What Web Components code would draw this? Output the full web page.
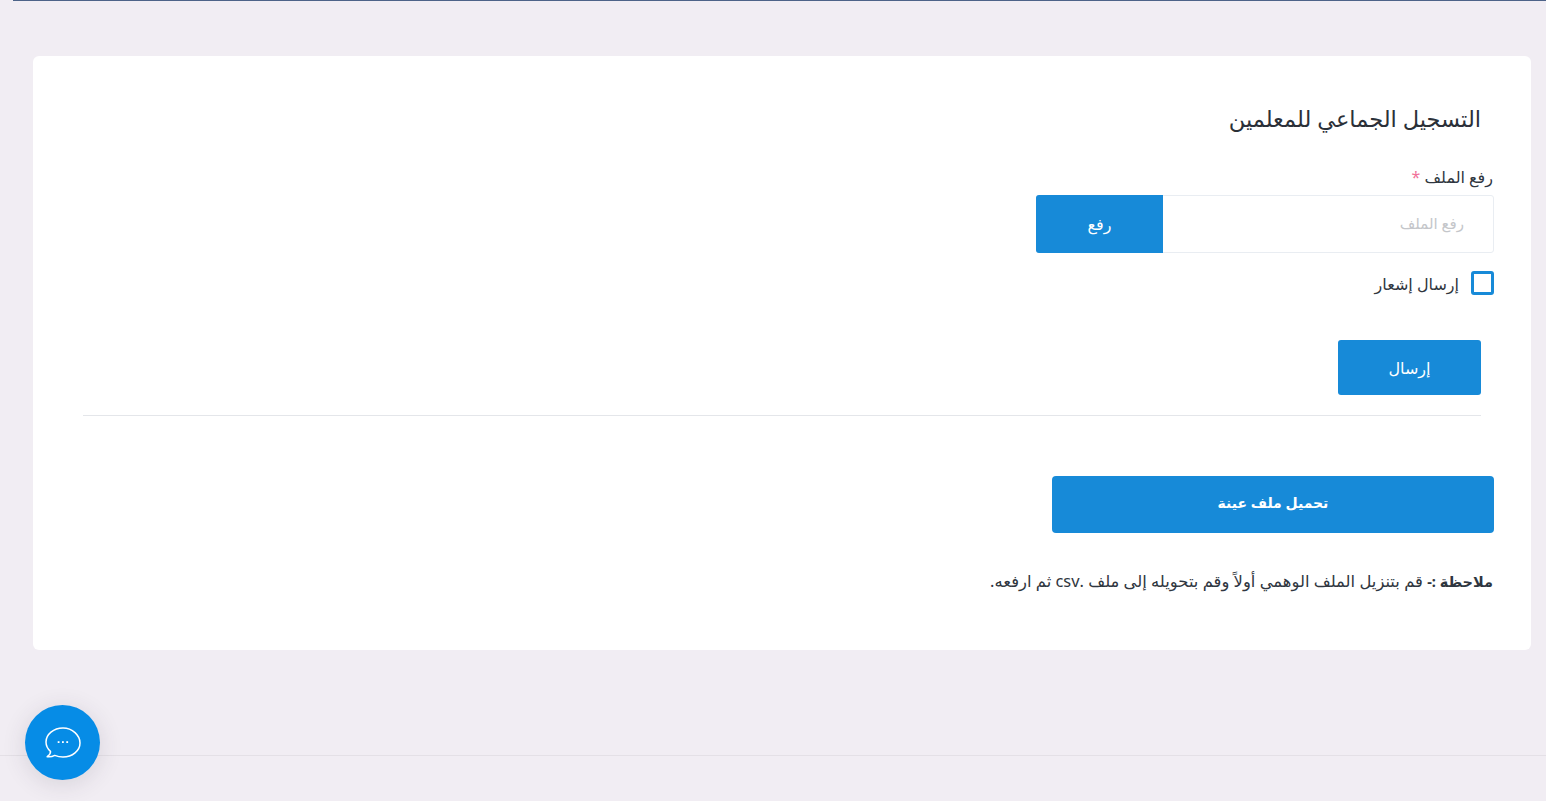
<!DOCTYPE html>
<html lang="ar" dir="rtl">
<head>
<meta charset="utf-8">
<title>التسجيل الجماعي للمعلمين</title>
<style>
    html, body {
        margin: 0;
        height: 100%;
        background: #f1edf3;
        font-family: "Noto Sans", "DejaVu Sans", sans-serif;
        color: #2f3640;
    }
</style>
</head>
<body>
<app-page>
    <form-card heading="التسجيل الجماعي للمعلمين">
        <file-upload label="رفع الملف" placeholder="رفع الملف" action="رفع"></file-upload>
        <check-field label="إرسال إشعار"></check-field>
        <send-row label="إرسال"></send-row>
        <download-row label="تحميل ملف عينة"></download-row>
        <note-line title-text="ملاحظة :-">قم بتنزيل الملف الوهمي أولاً وقم بتحويله إلى ملف .csv ثم ارفعه.</note-line>
    </form-card>
</app-page>
<chat-fab></chat-fab>
<script>
class AppPage extends HTMLElement {
    constructor() {
        super();
        this.attachShadow({ mode: "open" });
    }
    connectedCallback() {
        this.shadowRoot.innerHTML = `
        <style>
            :host {
                display: flex;
                flex-direction: column;
                height: 801px;
                overflow: hidden;
            }
            .topline {
                height: 1px;
                margin-left: 13px;
                background: #4d6388;
                flex: none;
            }
            main {
                padding: 55px 15px 0 33px;
                height: 754px;
                box-sizing: border-box;
                flex: none;
            }
            footer {
                flex: 1;
                border-top: 1px solid #e4e0e6;
            }
        </style>
        <div class="topline"></div>
        <main><slot></slot></main>
        <footer></footer>
        `;
    }
}

class FormCard extends HTMLElement {
    constructor() {
        super();
        this.attachShadow({ mode: "open" });
    }
    connectedCallback() {
        this.shadowRoot.innerHTML = `
        <style>
            :host {
                display: block;
                height: 594px;
                box-sizing: border-box;
                background: #fff;
                border-radius: 6px;
                padding: 47px 37px 0 50px;
            }
            h2 {
                margin: 0 13px 30px 0;
                font-size: 22.5px;
                line-height: 32px;
                font-weight: 400;
                color: #2b3038;
            }
        </style>
        <h2>${this.getAttribute("heading")}</h2>
        <slot></slot>
        `;
    }
}

class FileUpload extends HTMLElement {
    constructor() {
        super();
        this.attachShadow({ mode: "open" });
    }
    connectedCallback() {
        this.shadowRoot.innerHTML = `
        <style>
            :host {
                display: block;
                width: 458px;
            }
            label {
                display: block;
                font-size: 16px;
                line-height: 24px;
                margin: 0 1px 6px 0;
                color: #2f3640;
            }
            label span { color: #f1729a; }
            .box {
                display: flex;
                height: 58px;
                box-sizing: border-box;
                border: 1px solid #e9edf2;
                border-radius: 3px;
                background: #fff;
            }
            .hint {
                flex: 1;
                padding-right: 29px;
                line-height: 54px;
                font-size: 15px;
                color: #c4c6ca;
            }
            .btn {
                width: 127px;
                margin: -1px 0 -1px -1px;
                background: #178ad8;
                color: #fff;
                font-size: 16px;
                line-height: 58px;
                text-align: center;
                border-radius: 3px 0 0 3px;
            }
        </style>
        <label>${this.getAttribute("label")} <span>*</span></label>
        <div class="box">
            <div class="hint">${this.getAttribute("placeholder")}</div>
            <div class="btn">${this.getAttribute("action")}</div>
        </div>
        `;
    }
}

class CheckField extends HTMLElement {
    constructor() {
        super();
        this.attachShadow({ mode: "open" });
    }
    connectedCallback() {
        this.shadowRoot.innerHTML = `
        <style>
            :host {
                display: flex;
                align-items: center;
                gap: 12px;
                margin-top: 18px;
                height: 24px;
            }
            i {
                width: 23px;
                height: 24px;
                box-sizing: border-box;
                border: 3px solid #178ad8;
                border-radius: 3px;
                background: #fff;
            }
            span {
                font-size: 16px;
                line-height: 26px;
                padding-top: 2px;
                color: #2f3640;
            }
        </style>
        <i></i>
        <span>${this.getAttribute("label")}</span>
        `;
    }
}

class SendRow extends HTMLElement {
    constructor() {
        super();
        this.attachShadow({ mode: "open" });
    }
    connectedCallback() {
        this.shadowRoot.innerHTML = `
        <style>
            :host {
                display: block;
                margin: 45px 0 0 0;
                padding: 0 13px 20px 0;
            }
            .btn {
                width: 143px;
                height: 55px;
                line-height: 57px;
                text-align: center;
                background: #178ad8;
                color: #fff;
                font-size: 16px;
                border-radius: 3px;
            }
            hr {
                margin: 20px 0 0 0;
                border: 0;
                border-top: 1px solid #e4e6ea;
            }
        </style>
        <div class="btn">${this.getAttribute("label")}</div>
        <hr>
        `;
    }
}

class DownloadRow extends HTMLElement {
    constructor() {
        super();
        this.attachShadow({ mode: "open" });
    }
    connectedCallback() {
        this.shadowRoot.innerHTML = `
        <style>
            :host {
                display: block;
                width: 442px;
                margin-top: 40px;
            }
            .btn {
                height: 57px;
                line-height: 53px;
                text-align: center;
                background: #178ad8;
                color: #fff;
                font-size: 14px;
                font-weight: 700;
                border-radius: 4px;
            }
        </style>
        <div class="btn">${this.getAttribute("label")}</div>
        `;
    }
}

class NoteLine extends HTMLElement {
    constructor() {
        super();
        this.attachShadow({ mode: "open" });
    }
    connectedCallback() {
        this.shadowRoot.innerHTML = `
        <style>
            :host {
                display: block;
                margin: 36px 1px 0 0;
                font-size: 16.4px;
                line-height: 24px;
                color: #2f3640;
            }
            b { font-weight: 700; font-size: 14.5px; }
        </style>
        <b>${this.getAttribute("title-text")}</b> <slot></slot>
        `;
    }
}

class ChatFab extends HTMLElement {
    constructor() {
        super();
        this.attachShadow({ mode: "open" });
    }
    connectedCallback() {
        this.shadowRoot.innerHTML = `
        <style>
            :host {
                position: fixed;
                left: 25px;
                top: 705px;
                width: 75px;
                height: 75px;
                border-radius: 50%;
                background: #068ce6;
                box-shadow: 0 4px 24px rgba(60, 50, 70, .14);
                display: flex;
                align-items: center;
                justify-content: center;
            }
            svg { display: block; }
        </style>
        <svg width="38" height="34" viewBox="0 0 38 34" fill="none" stroke="#fff" stroke-width="1.5" stroke-linejoin="round" stroke-linecap="round">
            <path d="M19 2C9.6 2 2 8.400 2 16c0 3.600 1.700 6.900 4.500 9.400.2 1.500-.6 3.300-3.300 5.300 2.400.4 5.300-.1 7.500-1.300 2.600 1 5.400 1.600 8.300 1.600 9.400 0 17-6.400 17-14S28.400 2 19 2z"/>
            <g fill="#fff" stroke="none">
                <rect x="13.700" y="15.200" width="1.800" height="1.800"/>
                <rect x="18" y="15.200" width="1.800" height="1.800"/>
                <rect x="22.300" y="15.200" width="1.800" height="1.800"/>
            </g>
        </svg>
        `;
    }
}

customElements.define("app-page", AppPage);
customElements.define("form-card", FormCard);
customElements.define("file-upload", FileUpload);
customElements.define("check-field", CheckField);
customElements.define("send-row", SendRow);
customElements.define("download-row", DownloadRow);
customElements.define("note-line", NoteLine);
customElements.define("chat-fab", ChatFab);
</script>
</body>
</html>
